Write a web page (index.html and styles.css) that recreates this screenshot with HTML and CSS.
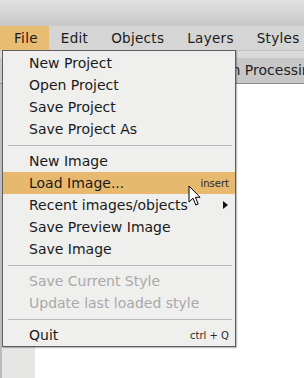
FILE: index.html
```html
<!DOCTYPE html>
<html lang="en">
<head>
    <meta charset="UTF-8">
    <meta name="viewport" content="width=device-width, initial-scale=1.0">
    <title>File menu</title>
    <link rel="stylesheet" href="styles.css">
</head>
<body>
    <div class="window">
        <div class="titlebar"></div>
        <div class="menubar">
            <span class="menu-title active">File</span>
            <span class="menu-title">Edit</span>
            <span class="menu-title">Objects</span>
            <span class="menu-title">Layers</span>
            <span class="menu-title">Styles</span>
        </div>
        <div class="tabstrip"></div>
        <div class="tabs">
            <span class="tab">Main Processing</span>
        </div>
        <div class="content">
            <div class="sidepanel"></div>
            <div class="canvas"></div>
        </div>

        <div class="dropdown">
            <div class="item">New Project</div>
            <div class="item">Open Project</div>
            <div class="item">Save Project</div>
            <div class="item">Save Project As</div>
            <div class="sep"></div>
            <div class="item">New Image</div>
            <div class="item hover">Load Image...<span class="shortcut">insert</span></div>
            <div class="item">Recent images/objects<span class="arrow"></span></div>
            <div class="item">Save Preview Image</div>
            <div class="item">Save Image</div>
            <div class="sep"></div>
            <div class="item disabled">Save Current Style</div>
            <div class="item disabled">Update last loaded style</div>
            <div class="sep"></div>
            <div class="item">Quit<span class="shortcut">ctrl + Q</span></div>
        </div>

        <svg class="cursor" width="13" height="22" viewBox="0 0 13 22">
            <path d="M1 1 L1 17 L5 13.2 L7.8 20 L10.2 19 L7.4 12.3 L12 12.3 Z" fill="#fff" stroke="#000" stroke-width="1" stroke-linejoin="round"/>
        </svg>
    </div>
</body>
</html>
```

FILE: styles.css
```css
body {
    margin: 0;
    padding: 0;
    background-color: #fff;
    font-family: "DejaVu Sans", Verdana, sans-serif;
}
.window {
    position: relative;
    width: 304px;
    height: 378px;
    overflow: hidden;
}
.titlebar {
    height: 26px;
    background: linear-gradient(#e1e1e1, #c8c8c8);
}
.menubar {
    display: flex;
    height: 24px;
    background-color: #d5d5d5;
    font-size: 13.5px;
    letter-spacing: 0.3px;
    line-height: 24px;
    color: #1a1a1a;
    white-space: nowrap;
}
.menu-title {
    padding: 0 11.5px;
}
.menu-title:first-child {
    padding-left: 14px;
}
.menu-title.active {
    background-color: #e9bc73;
}
.tabstrip {
    height: 7px;
    border-top: 1px solid #c2c2c2;
    background-color: #dadada;
}
.tabs {
    height: 25px;
    padding-left: 207px;
    background-color: #c7c7c7;
    border-bottom: 1px solid #8c8c8c;
    font-size: 14px;
    line-height: 25px;
    color: #222;
    white-space: nowrap;
}
.content {
    display: flex;
    height: 400px;
}
.sidepanel {
    width: 33px;
    background-color: #e6e6e4;
    border-left: 2px solid #bcbcbc;
}
.canvas {
    flex: 1;
    background-color: #fff;
}
.dropdown {
    position: absolute;
    left: 2px;
    top: 50px;
    width: 232px;
    padding: 1px 0 0;
    background-color: #efefee;
    border: 1px solid #5e5e5e;
    box-shadow: 1px 1px 1px rgba(0, 0, 0, 0.25);
    font-size: 14px;
    color: #1a1a1a;
}
.item {
    display: flex;
    align-items: center;
    justify-content: space-between;
    height: 22px;
    padding: 0 6px 0 26px;
    white-space: nowrap;
}
.item.hover {
    background-color: #e6b96e;
}
.item.disabled {
    color: #a9a9a9;
}
.shortcut {
    font-size: 10px;
    color: #2a2a2a;
}
.arrow {
    width: 0;
    height: 0;
    margin-right: 1px;
    border-top: 4px solid transparent;
    border-bottom: 4px solid transparent;
    border-left: 5px solid #111;
}
.sep {
    height: 1px;
    margin: 5px 3px 4px 5px;
    background-color: #b9b9b9;
}
.cursor {
    position: absolute;
    left: 188px;
    top: 185px;
}
```
